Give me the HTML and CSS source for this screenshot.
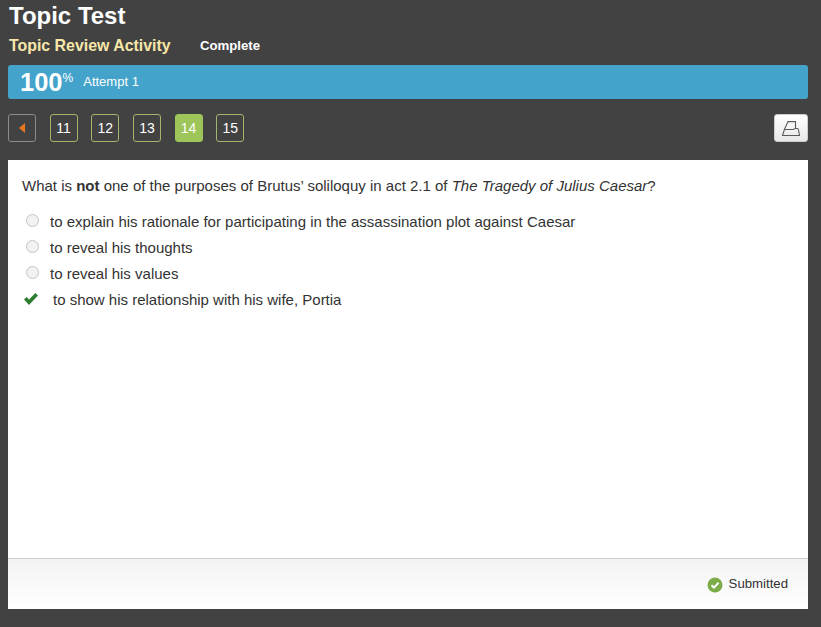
FILE: index.html
```html
<!DOCTYPE html>
<html lang="en">
<head>
    <meta charset="UTF-8">
    <meta name="viewport" content="width=device-width, initial-scale=1">
    <title>Topic Test</title>
    <link rel="stylesheet" href="styles.css">
</head>
<body>
    <h1 class="page-title">Topic Test</h1>
    <div class="activity-row">
        <span class="activity-name">Topic Review Activity</span>
        <span class="activity-status">Complete</span>
    </div>
    <div class="score-bar">
        <span class="score">100<sup>%</sup></span>
        <span class="attempt">Attempt 1</span>
    </div>
    <div class="nav-row">
        <button class="nav-btn prev-btn"><span class="prev-arrow"></span></button>
        <button class="nav-btn">11</button>
        <button class="nav-btn">12</button>
        <button class="nav-btn">13</button>
        <button class="nav-btn current">14</button>
        <button class="nav-btn">15</button>
        <button class="print-btn">
            <svg width="18" height="15" viewBox="0 0 18 15" fill="none" stroke="#5a5a5a" stroke-width="1.1">
                <path d="M2.4 8.5 L6 .6 H13.5 V7.5"/>
                <path d="M2.4 8.5 H11 L13.5 7.5 H15.5 Q16.2 7.5 16.5 9 L17.5 14.5 H.5 Z"/>
            </svg>
        </button>
    </div>
    <div class="question-card">
        <div class="question-body">
            <p class="question">What is <b>not</b> one of the purposes of Brutus’ soliloquy in act 2.1 of <i>The Tragedy of Julius Caesar</i>?</p>
            <div class="answer"><span class="radio"></span>to explain his rationale for participating in the assassination plot against Caesar</div>
            <div class="answer"><span class="radio"></span>to reveal his thoughts</div>
            <div class="answer"><span class="radio"></span>to reveal his values</div>
            <div class="answer correct">
                <svg class="check" width="16" height="14" viewBox="0 0 16 14">
                    <path d="M1 7.5 L3.6 5 L6 7.6 L12.4 1 L15 3.5 L6 13 Z" fill="#2e7d32"/>
                </svg>
                to show his relationship with his wife, Portia
            </div>
        </div>
        <div class="card-footer">
            <svg class="submitted-icon" width="16" height="16" viewBox="0 0 16 16">
                <circle cx="8" cy="8" r="7.5" fill="#7cac4a"/>
                <path d="M4.5 8.3 L7 10.6 L11.5 5.8" fill="none" stroke="#fff" stroke-width="2"/>
            </svg>
            <span class="submitted-text">Submitted</span>
        </div>
    </div>
</body>
</html>
```

FILE: styles.css
```css
body {
    margin: 0;
    padding: 0 13px 18px 8px;
    height: 627px;
    box-sizing: border-box;
    display: flex;
    flex-direction: column;
    background-color: #424242;
    font-family: "Liberation Sans", Arial, sans-serif;
    overflow: hidden;
}
.page-title {
    margin: 0 0 0 1px;
    padding-top: 1px;
    height: 31px;
    box-sizing: border-box;
    font-size: 24px;
    line-height: 29px;
    color: #fff;
}
.activity-row {
    display: flex;
    align-items: center;
    height: 29px;
    margin-left: 1px;
}
.activity-name {
    width: 191px;
    font-size: 15.9px;
    font-weight: bold;
    color: #f7e7a9;
}
.activity-status {
    font-size: 13.2px;
    font-weight: bold;
    color: #fff;
}
.score-bar {
    display: flex;
    align-items: center;
    height: 34px;
    margin-top: 5px;
    padding-left: 12px;
    background-color: #43a3cb;
    border-radius: 3px;
    color: #fff;
}
.score {
    font-size: 25.5px;
    font-weight: bold;
}
.score sup {
    font-size: 12px;
    font-weight: normal;
    line-height: 0;
    vertical-align: 9px;
}
.attempt {
    margin: -2px 0 0 10px;
    font-size: 13px;
}
.nav-row {
    display: flex;
    align-items: center;
    gap: 13.65px;
    height: 28px;
    margin-top: 15px;
}
.nav-btn {
    width: 28px;
    height: 28px;
    padding: 0;
    background-color: #424242;
    border: 1px solid #a3b56c;
    border-radius: 3px;
    color: #fff;
    font-family: inherit;
    font-size: 14px;
}
.prev-btn {
    display: flex;
    align-items: center;
    justify-content: center;
    border-color: #8d8d8d;
}
.prev-arrow {
    width: 0;
    height: 0;
    border-top: 5px solid transparent;
    border-bottom: 5px solid transparent;
    border-right: 6px solid #e87722;
}
.current {
    background-color: #9dc55a;
    border-color: #9dc55a;
}
.print-btn {
    display: flex;
    align-items: center;
    justify-content: center;
    width: 34px;
    height: 28px;
    margin-left: auto;
    padding: 0;
    background: linear-gradient(#fff, #e8e8e8);
    border: 1px solid #ccc;
    border-radius: 3px;
}
.question-card {
    flex-grow: 1;
    display: flex;
    flex-direction: column;
    margin-top: 18px;
    background-color: #fff;
}
.question-body {
    flex-grow: 1;
    padding: 17px 14px 0;
    font-size: 15px;
    color: #333;
}
.question {
    margin: 0 0 13px;
    line-height: 18px;
}
.answer {
    display: flex;
    align-items: center;
    height: 26px;
}
.radio {
    width: 11px;
    height: 11px;
    margin: -1px 11px 0 4px;
    border: 1px solid #c4c4c4;
    border-radius: 50%;
    background-color: #f2f2f2;
}
.check {
    margin: 0 14px 0 1px;
}
.card-footer {
    display: flex;
    align-items: center;
    justify-content: flex-end;
    gap: 6px;
    height: 50px;
    padding-right: 20px;
    background: linear-gradient(#f3f3f3, #fff);
    border-top: 1px solid #d0d0d0;
    font-size: 13.2px;
    color: #333;
}
.submitted-icon {
    margin-top: 2px;
}
.submitted-text {
    margin-top: -2px;
}
```
